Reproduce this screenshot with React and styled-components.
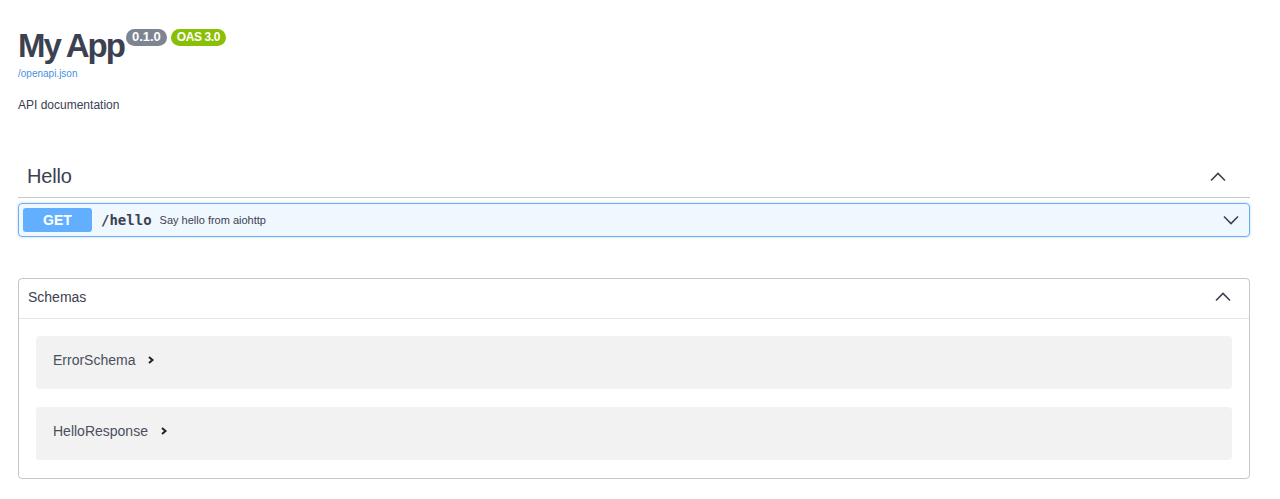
import React from 'react';
import styled, { createGlobalStyle } from 'styled-components';

const Global = createGlobalStyle`
  body {
    margin: 0;
    background: #fff;
    font-family: "Liberation Sans", Arial, sans-serif;
    color: #3b4151;
  }
`;

const Page = styled.div`
  padding: 0 30px 0 18px;
`;

const Info = styled.div`
  padding-top: 26px;
`;

const TitleRow = styled.div`
  display: flex;
  align-items: flex-start;
`;

const Title = styled.h2`
  margin: 0;
  font-size: 33px;
  font-weight: 700;
  line-height: 40px;
  letter-spacing: -2px;
  color: #3b4151;
`;

const Badge = styled.span`
  display: inline-block;
  margin: 3px 0 0 ${(p) => p.$gap}px;
  padding: 1px 6px 2px;
  border-radius: 57px;
  background: ${(p) => p.$bg};
  color: #fff;
  font-size: ${(p) => (p.$tight ? '12px' : '13px')};
  font-weight: 700;
  line-height: 14px;
  letter-spacing: ${(p) => (p.$tight ? '-0.4px' : '0')};
`;

const BaseUrl = styled.a`
  display: block;
  margin-top: 2px;
  font-size: 10px;
  color: #4990e2;
  text-decoration: none;
`;

const Desc = styled.p`
  margin: 19px 0 0;
  font-size: 12px;
  color: #3b4151;
`;

const Tag = styled.div`
  margin-top: 41px;
`;

const TagHeader = styled.div`
  box-sizing: border-box;
  display: flex;
  align-items: center;
  justify-content: space-between;
  height: 45px;
  padding: 3px 22px 0 9px;
  border-bottom: 1px solid rgba(59, 65, 81, 0.3);
`;

const TagName = styled.h3`
  margin: 0;
  font-size: 20px;
  font-weight: 400;
  letter-spacing: -0.2px;
  color: #3b4151;
`;

const Op = styled.div`
  display: flex;
  align-items: center;
  margin-top: 5px;
  height: 32px;
  padding: 0 8px 0 4px;
  border: 1px solid #61affe;
  border-radius: 4px;
  background: rgba(97, 175, 254, 0.1);
  box-shadow: 0 0 3px rgba(0, 0, 0, 0.19);
`;

const Method = styled.span`
  width: 69px;
  height: 24px;
  line-height: 24px;
  text-align: center;
  border-radius: 3px;
  background: #61affe;
  color: #fff;
  font-size: 14px;
  font-weight: 700;
  flex-shrink: 0;
`;

const Path = styled.span`
  margin-left: 9px;
  font-family: "DejaVu Sans Mono", monospace;
  font-size: 14px;
  font-weight: 700;
  color: #3b4151;
`;

const Summary = styled.span`
  margin-left: 8px;
  font-size: 11px;
  color: #3b4151;
  flex: 1;
`;

const Models = styled.section`
  margin-top: 41px;
  border: 1px solid rgba(59, 65, 81, 0.3);
  border-radius: 4px;
`;

const ModelsHeader = styled.div`
  box-sizing: border-box;
  display: flex;
  align-items: center;
  justify-content: space-between;
  height: 40px;
  padding: 0 16px 3px 9px;
  border-bottom: 1px solid rgba(59, 65, 81, 0.15);
  font-size: 14px;
  color: #3b4151;
`;

const ModelList = styled.div`
  display: flex;
  flex-direction: column;
  gap: 18px;
  padding: 17px 17px 18px;
`;

const Model = styled.div`
  box-sizing: border-box;
  display: flex;
  align-items: center;
  height: 53px;
  padding: 0 17px 5px;
  border-radius: 4px;
  background: rgba(0, 0, 0, 0.05);
  font-size: 14px;
  color: #4a4f5c;
`;

const ModelName = styled.span`
  margin-right: 10px;
`;

const Chevron = ({ dir = 'down', size = 20 }) => {
  const d = dir === 'up' ? 'M3 13.5 L10 6.5 L17 13.5' : 'M3 6.5 L10 13.5 L17 6.5';
  return (
    <svg width={size} height={size} viewBox="0 0 20 20" fill="none">
      <path d={d} stroke="#3b4151" strokeWidth="1.6" />
    </svg>
  );
};

const SmallArrow = () => (
  <svg width="12" height="12" viewBox="0 0 12 12" fill="none">
    <path d="M4 3 L7.5 6 L4 9" stroke="#222" strokeWidth="2" />
  </svg>
);

export default function App() {
  return (
    <>
      <Global />
      <Page>
        <Info>
          <TitleRow>
            <Title>My App</Title>
            <Badge $bg="#7d8492" $gap={2}>0.1.0</Badge>
            <Badge $bg="#89bf04" $gap={4} $tight>OAS 3.0</Badge>
          </TitleRow>
          <BaseUrl href="#">/openapi.json</BaseUrl>
          <Desc>API documentation</Desc>
        </Info>
        <Tag>
          <TagHeader>
            <TagName>Hello</TagName>
            <Chevron dir="up" />
          </TagHeader>
          <Op>
            <Method>GET</Method>
            <Path>/hello</Path>
            <Summary>Say hello from aiohttp</Summary>
            <Chevron dir="down" />
          </Op>
        </Tag>
        <Models>
          <ModelsHeader>
            Schemas
            <Chevron dir="up" />
          </ModelsHeader>
          <ModelList>
            <Model>
              <ModelName>ErrorSchema</ModelName>
              <SmallArrow />
            </Model>
            <Model>
              <ModelName>HelloResponse</ModelName>
              <SmallArrow />
            </Model>
          </ModelList>
        </Models>
      </Page>
    </>
  );
}
